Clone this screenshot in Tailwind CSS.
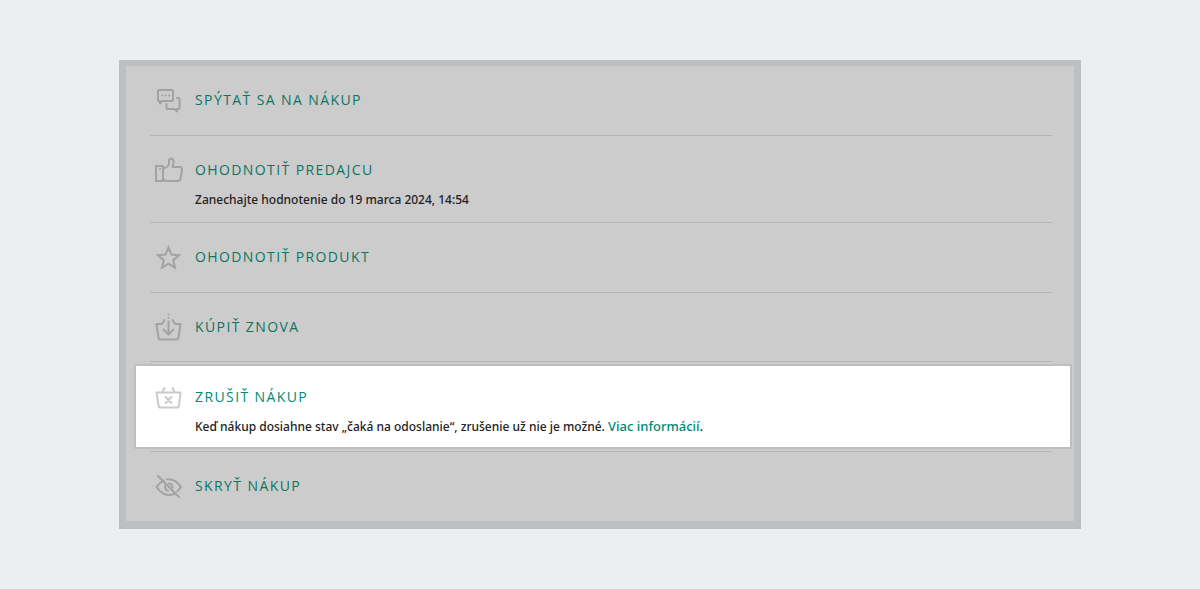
<!DOCTYPE html>
<html lang="sk">
  <head>
    <meta charset="UTF-8" />
    <meta name="viewport" content="width=device-width, initial-scale=1.0" />
    <title>Možnosti nákupu</title>
    <script src="https://cdn.jsdelivr.net/npm/@tailwindcss/browser@4"></script>
  </head>
  <body class="min-h-screen flex items-center justify-center bg-[#ebeff2] font-['Open_Sans',sans-serif] text-sm leading-5 text-[#222222]">
    <main class="w-full max-w-[962px] border-x-[7px] border-t-[6px] border-b-8 border-[#bdbfc1] bg-[#cccccc] pl-6 pr-[22px]">
      <ul>
        <!-- ask about the purchase -->
        <li class="flex gap-3 border-b border-[#b5b5b5] pl-[5px] pt-6 pb-[25px]">
          <svg class="w-7 h-7 -my-1 shrink-0 text-[#a2a2a2]" viewBox="0 0 28 28" fill="none" stroke="currentColor" stroke-width="2" stroke-linejoin="round" stroke-linecap="round" aria-hidden="true">
            <path d="M4 4h13q1 0 1 1v9q0 1-1 1H7.500l-2.500 2.500V15H4q-1 0-1-1V5q0-1 1-1z" />
            <path d="M22 12h1.500q1 0 1 1v9q0 1-1 1H22v2.500L19.500 23H12.500q-1 0-1-1v-4" />
            <path d="M7 9.500h.1M10.500 9.500h.1M14 9.500h.1" />
          </svg>
          <a href="#" class="tracking-widest text-[#0b7564]">SPÝTAŤ SA NA NÁKUP</a>
        </li>

        <!-- rate the seller -->
        <li class="flex gap-3 border-b border-[#b5b5b5] pl-[5px] pt-6 pb-3">
          <svg class="w-7 h-7 -my-1 shrink-0 text-[#a2a2a2]" viewBox="0 0 28 28" fill="none" stroke="currentColor" stroke-width="2" stroke-linejoin="round" stroke-linecap="round" aria-hidden="true">
            <path d="M1 10h7v15H1z" />
            <path d="M8 13q5-2 6-5V4q1-2 3-1 2 1 1.500 4l-1 4H25q2 .3 2 2.500l-1.500 9.500q-.5 2-2.500 2H12q-2 0-4-2" />
            <path d="M5 13h.1" />
          </svg>
          <div>
            <a href="#" class="block tracking-widest text-[#0b7564]">OHODNOTIŤ PREDAJCU</a>
            <p class="mt-[10px] font-['Noto_Sans','Open_Sans',sans-serif] text-xs leading-5 font-medium">Zanechajte hodnotenie do 19 marca 2024, 14:54</p>
          </div>
        </li>

        <!-- rate the product -->
        <li class="flex gap-3 border-b border-[#b5b5b5] pl-[5px] pt-6 pb-[25px]">
          <svg class="w-7 h-7 -my-1 shrink-0 text-[#a2a2a2]" viewBox="0 0 28 28" fill="none" stroke="currentColor" stroke-width="2" stroke-linejoin="miter" aria-hidden="true">
            <path d="M13.500 4.500l2.900 7.100 7.600.6-5.800 5 1.800 7.400-6.500-4-6.500 4 1.800-7.400-5.800-5 7.600-.6z" />
          </svg>
          <a href="#" class="tracking-widest text-[#0b7564]">OHODNOTIŤ PRODUKT</a>
        </li>

        <!-- buy again -->
        <li class="flex gap-3 border-b border-[#b5b5b5] pl-[5px] pt-6 pb-6">
          <svg class="w-7 h-7 -my-1 shrink-0 text-[#a2a2a2]" viewBox="0 0 28 28" fill="none" stroke="currentColor" stroke-width="2" stroke-linejoin="round" stroke-linecap="round" aria-hidden="true">
            <path d="M9.500 7L7 11H1.500l2 13.500q.3 2 2 2H21.500q1.700 0 2-2L25.500 11H20L17.500 7" />
            <path d="M13.500 1.500v.1M13.500 5v.1M13.500 8.500v13M8.500 16.500l5 5 5-5" />
          </svg>
          <a href="#" class="tracking-widest text-[#0b7564]">KÚPIŤ ZNOVA</a>
        </li>

        <!-- cancel the purchase, highlighted -->
        <li class="border-b border-[#b5b5b5] py-[2px]">
          <div class="flex gap-3 -ml-4 -mr-5 border-2 border-[#bfbfbf] bg-white pl-[19px] pt-[21px] pb-[10px]">
            <svg class="w-7 h-7 -my-1 shrink-0 text-[#cacaca]" viewBox="0 0 28 28" fill="none" stroke="currentColor" stroke-width="2" stroke-linejoin="round" stroke-linecap="round" aria-hidden="true">
              <path d="M9.500 5L7 9.500M17.500 5L20 9.500M1.500 9.500h24l-1.500 13q-.3 2-2 2H5.500q-1.700 0-2-2z" />
              <path d="M10.500 14l6 6M16.500 14l-6 6" />
            </svg>
            <div>
              <a href="#" class="block tracking-widest text-[#008a75]">ZRUŠIŤ NÁKUP</a>
              <p class="mt-[10px] font-['Noto_Sans','Open_Sans',sans-serif] text-xs leading-5 font-medium">Keď nákup dosiahne stav „čaká na odoslanie“, zrušenie už nie je možné. <a href="#" class="text-[13px] leading-4 text-[#008a75]">Viac informácií</a>.</p>
            </div>
          </div>
        </li>

        <!-- hide the purchase -->
        <li class="flex gap-3 pl-[5px] pt-6 pb-[25px]">
          <svg class="w-7 h-7 -my-1 shrink-0 text-[#a2a2a2]" viewBox="0 0 28 28" fill="none" stroke="currentColor" stroke-width="2" stroke-linejoin="round" stroke-linecap="round" aria-hidden="true">
            <path d="M9 8.300Q4.500 10.500 1.500 15q8 11 17.500 7M12 7.200Q20.500 6.500 26 15q-1.500 2.500-3.800 4.300" />
            <path d="M10.300 13.500q-1 4 2.700 5.200M14 11.500q3.300.5 3.500 4M3 4l21 21" />
          </svg>
          <a href="#" class="tracking-widest text-[#0b7564]">SKRYŤ NÁKUP</a>
        </li>
      </ul>
    </main>
  </body>
</html>
